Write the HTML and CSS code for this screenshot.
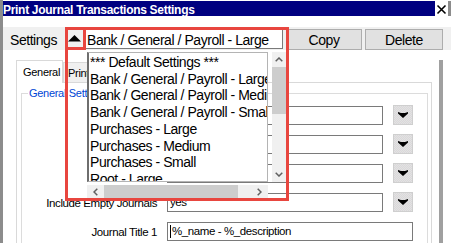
FILE: index.html
```html
<!DOCTYPE html>
<html>
<head>
<meta charset="utf-8">
<title>Print Journal Transactions Settings</title>
<link rel="stylesheet" href="styles.css">
</head>
<body>
<div class="win">
  <div class="titlebar">
    <div class="title">Print Journal Transactions Settings</div>
    <div class="close"><svg width="11" height="11" viewBox="0 0 11 11"><path d="M1.5 1.5 L9.5 9.5 M9.5 1.5 L1.5 9.5" stroke="#000" stroke-width="1.6" fill="none"/></svg></div>
    <div class="tb-edge"></div>
  </div>

  <div class="settings">
    <div class="lbl">Settings</div>
    <div class="combo">
      <div class="arrow"><svg width="13" height="7" viewBox="0 0 13 7"><polygon points="6.5,0 13,6.5 0,6.5" fill="#000"/></svg></div>
      <div class="field">Bank / General / Payroll - Large</div>
    </div>
    <div class="btn copy">Copy</div>
    <div class="btn del">Delete</div>
  </div>

  <div class="lower">
    <div class="tabs-area">
      <div class="tabstrip">
        <div class="tab active">General</div>
        <div class="tab">Printing</div>
      </div>
      <div class="panel">
        <div class="group">
          <div class="legend">General Settings</div>
          <div class="form">
            <div class="glabel"></div>
            <div class="input"></div>
            <div class="ddbtn"><svg width="10" height="6" viewBox="0 0 10 6"><polygon points="0,0 3,1 7,1 10,0 10,1.5 5,6 0,1.5" fill="#000"/></svg></div>

            <div class="glabel"></div>
            <div class="input"></div>
            <div class="ddbtn"><svg width="10" height="6" viewBox="0 0 10 6"><polygon points="0,0 3,1 7,1 10,0 10,1.5 5,6 0,1.5" fill="#000"/></svg></div>

            <div class="glabel"></div>
            <div class="input"></div>
            <div class="ddbtn"><svg width="10" height="6" viewBox="0 0 10 6"><polygon points="0,0 3,1 7,1 10,0 10,1.5 5,6 0,1.5" fill="#000"/></svg></div>

            <div class="glabel">Include Empty Journals</div>
            <div class="input">yes</div>
            <div class="ddbtn"><svg width="10" height="6" viewBox="0 0 10 6"><polygon points="0,0 3,1 7,1 10,0 10,1.5 5,6 0,1.5" fill="#000"/></svg></div>

            <div class="glabel">Journal Title 1</div>
            <div class="input wide"><span class="caret"></span>%_name - %_description</div>
          </div>
        </div>
      </div>
    </div>
    <div class="edge"></div>
  </div>

  <div class="popup">
    <div class="list">
      <div class="item">*** Default Settings ***</div>
      <div class="item">Bank / General / Payroll - Large</div>
      <div class="item">Bank / General / Payroll - Medium</div>
      <div class="item">Bank / General / Payroll - Small</div>
      <div class="item">Purchases - Large</div>
      <div class="item">Purchases - Medium</div>
      <div class="item">Purchases - Small</div>
      <div class="item">Root - Large</div>
    </div>
    <div class="vsb">
      <div class="sbbtn"><svg width="8" height="5" viewBox="0 0 8 5"><polyline points="0.7,4.3 4,1 7.3,4.3" fill="none" stroke="#606060" stroke-width="1.5"/></svg></div>
      <div class="vthumb"></div>
      <div class="sbfill"></div>
      <div class="sbbtn"><svg width="8" height="5" viewBox="0 0 8 5"><polyline points="0.7,0.7 4,4 7.3,0.7" fill="none" stroke="#606060" stroke-width="1.5"/></svg></div>
    </div>
    <div class="hsb">
      <div class="hbtn"><svg width="5" height="8" viewBox="0 0 5 8"><polyline points="4.3,0.7 1,4 4.3,7.3" fill="none" stroke="#606060" stroke-width="1.5"/></svg></div>
      <div class="hthumb"></div>
      <div class="sbfill"></div>
      <div class="hbtn"><svg width="5" height="8" viewBox="0 0 5 8"><polyline points="0.7,0.7 4,4 0.7,7.3" fill="none" stroke="#606060" stroke-width="1.5"/></svg></div>
    </div>
  </div>
  <div class="arrowmark"></div>
</div>
</body>
</html>
```

FILE: styles.css
```css
* { box-sizing: border-box; }
html, body { margin: 0; padding: 0; background: #fff; }
body {
  width: 451px;
  height: 243px;
  overflow: hidden;
  font-family: "Liberation Sans", Arial, sans-serif;
  color: #000;
}

.win {
  position: relative;
  width: 451px;
  height: 243px;
  border-left: 3px solid #8c8c8c;
  overflow: hidden;
}

/* title bar */
.titlebar {
  display: flex;
  margin-top: 1px;
  height: 15px;
}
.title {
  flex: 1;
  background: #000080;
  color: #fff;
  font-weight: bold;
  font-size: 12px;
  letter-spacing: -0.3px;
  line-height: 13px;
  padding-top: 3px;
  white-space: nowrap;
}
.close {
  width: 13px;
  height: 13px;
  margin-top: 2px;
  background: #fff;
  display: flex;
  align-items: center;
  justify-content: center;
}
.tb-edge {
  width: 3px;
  background: #8c8c8c;
}

/* settings row */
.settings {
  display: flex;
  margin-top: 11px;
  height: 23px;
  background: #f0f0f0;
  font-size: 14px;
  letter-spacing: -0.45px;
}
.lbl {
  width: 59px;
  padding-left: 7px;
  padding-top: 4px;
  line-height: 19px;
  white-space: nowrap;
}
.combo { display: flex; }
.arrow {
  width: 22px;
  height: 23px;
  padding: 8px 0 0 6px;
}
.arrow svg { display: block; }
.field {
  width: 199px;
  height: 20px;
  margin-top: 2px;
  background: #fff;
  border: 1px solid #7a7a7a;
  padding: 2px 0 0 2px;
  line-height: 17px;
  white-space: nowrap;
}
.btn {
  margin-left: 3px;
  margin-top: 2px;
  height: 21px;
  background: #e1e1e1;
  border: 1px solid #adadad;
  line-height: 19px;
  padding-top: 1px;
  text-align: center;
}
.copy { width: 76px; }
.del { width: 78px; }

/* lower area */
.lower {
  display: flex;
  margin-top: 10px;
  height: 183px;
}
.tabs-area {
  width: 436px;
  padding-left: 13px;
}
.edge {
  width: 4px;
  background: #a0a0a0;
}
.tabstrip {
  display: flex;
  align-items: flex-end;
  height: 22px;
}
.tab {
  width: 80px;
  height: 20px;
  background: #f0f0f0;
  border: 1px solid #d9d9d9;
  border-bottom: none;
  font-size: 11px;
  letter-spacing: -0.3px;
  line-height: 13px;
  padding: 4px 0 0 4px;
  white-space: nowrap;
}
.tab.active {
  position: relative;
  z-index: 1;
  width: 47px;
  height: 23px;
  margin-bottom: -1px;
  background: #fff;
  padding: 5px 0 0 6px;
}
.panel {
  width: 416px;
  height: 170px;
  border: 1px solid #d9d9d9;
  background: #fff;
  padding: 10px 0 0 4px;
}
.group {
  width: 407px;
  height: 200px;
  border: 1px solid #dcdcdc;
}
.legend {
  display: table;
  margin: -7px 0 0 6px;
  padding: 0 1px;
  background: #fff;
  color: #0046d5;
  font-size: 11px;
  letter-spacing: -0.3px;
  line-height: 13px;
}
.form {
  display: grid;
  grid-template-columns: 135px 216px 20px;
  grid-auto-rows: 20px;
  column-gap: 10px;
  row-gap: 9px;
  margin-top: 5px;
  font-size: 11.5px;
  letter-spacing: -0.4px;
}
.glabel {
  text-align: right;
  line-height: 20px;
  padding-top: 1px;
  white-space: nowrap;
}
.input {
  height: 19px;
  margin-top: 1px;
  border: 1px solid #7a7a7a;
  background: #fff;
  line-height: 17px;
  padding-left: 2px;
  white-space: nowrap;
}
.input.wide { grid-column: 2 / span 2; }
.caret {
  display: inline-block;
  width: 1px;
  height: 13px;
  background: #000;
  vertical-align: -3px;
  margin-right: 1px;
}
.ddbtn {
  width: 20px;
  height: 20px;
  border: 1px solid #cfcfcf;
  background-color: #e2dee2;
  background-image: repeating-conic-gradient(#dcd4dc 0 25%, #e0e6e0 0 50%);
  background-size: 2px 2px;
  display: flex;
  align-items: center;
  justify-content: center;
}
.ddbtn svg { display: block; }

/* dropdown popup overlay */
.popup {
  position: absolute;
  left: 62px;
  top: 27px;
  width: 224px;
  height: 174px;
  border: 3px solid #e8463f;
  padding: 22px 0 0 19px;
  display: grid;
  grid-template-columns: 181px 14px;
  grid-template-rows: 130px 13px;
  column-gap: 4px;
  row-gap: 3px;
}
.list {
  background: #fff;
  border: 1px solid #b4b4b4;
  border-left: 2px solid #6e6e6e;
  padding: 1px 0 0 1px;
  overflow: hidden;
  font-size: 14px;
  letter-spacing: -0.45px;
  line-height: 16.7px;
}
.item { white-space: nowrap; }
.vsb {
  background: #f0f0f0;
  display: flex;
  flex-direction: column;
}
.sbbtn {
  height: 15px;
  display: flex;
  align-items: center;
  justify-content: center;
}
.sbbtn svg, .hbtn svg { display: block; }
.vthumb {
  height: 47px;
  background: #cdcdcd;
}
.sbfill { flex: 1; }
.hsb {
  grid-column: 1;
  background: #f0f0f0;
  display: flex;
}
.hbtn {
  width: 17px;
  display: flex;
  align-items: center;
  justify-content: center;
}
.hthumb {
  width: 134px;
  background: #cdcdcd;
}
.arrowmark {
  position: absolute;
  left: 62px;
  top: 27px;
  width: 21px;
  height: 23px;
  border: 3px solid #e8463f;
}
```
